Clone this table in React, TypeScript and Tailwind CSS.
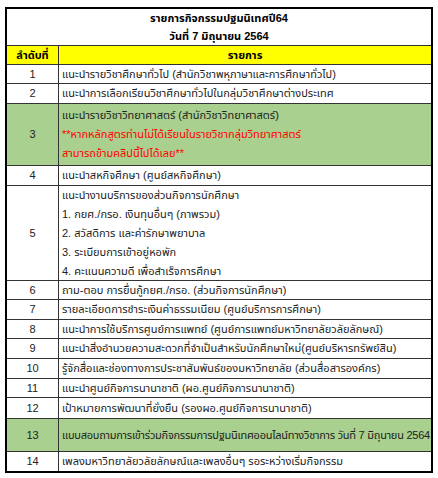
import React from "react";

type Row = { n: string; lines: React.ReactNode[]; h: string; lh?: string; green?: boolean };

const rows: Row[] = [
  { n: "1", lines: ["แนะนำรายวิชาศึกษาทั่วไป (สำนักวิชาพหุภาษาและการศึกษาทั่วไป)"], h: "h-[19px]" },
  { n: "2", lines: ["แนะนำการเลือกเรียนวิชาศึกษาทั่วไปในกลุ่มวิชาศึกษาต่างประเทศ"], h: "h-[20px]" },
  {
    n: "3",
    green: true,
    h: "h-[62px]",
    lines: [
      "แนะนำรายวิชาวิทยาศาสตร์ (สำนักวิชาวิทยาศาสตร์)",
      <span className="text-[#ff0000]">**หากหลักสูตรท่านไม่ได้เรียนในรายวิชากลุ่มวิทยาศาสตร์</span>,
      <span className="text-[#ff0000]">สามารถข้ามคลิปนี้ไปได้เลย**</span>,
    ],
  },
  { n: "4", lines: ["แนะนำสหกิจศึกษา (ศูนย์สหกิจศึกษา)"], h: "h-[20px]" },
  {
    n: "5",
    h: "h-[95px]",
    lines: [
      "แนะนำงานบริการของส่วนกิจการนักศึกษา",
      "1. กยศ./กรอ. เงินทุนอื่นๆ (ภาพรวม)",
      "2. สวัสดิการ และค่ารักษาพยาบาล",
      "3. ระเบียบการเข้าอยู่หอพัก",
      "4. คะแนนความดี เพื่อสำเร็จการศึกษา",
    ],
  },
  { n: "6", lines: ["ถาม-ตอบ การยื่นกู้กยศ./กรอ. (ส่วนกิจการนักศึกษา)"], h: "h-[19px]" },
  { n: "7", lines: ["รายละเอียดการชำระเงินค่าธรรมเนียม (ศูนย์บริการการศึกษา)"], h: "h-[20px]" },
  { n: "8", lines: ["แนะนำการใช้บริการศูนย์การแพทย์ (ศูนย์การแพทย์มหาวิทยาลัยวลัยลักษณ์)"], h: "h-[19px]" },
  { n: "9", lines: ["แนะนำสิ่งอำนวยความสะดวกที่จำเป็นสำหรับนักศึกษาใหม่(ศูนย์บริหารทรัพย์สิน)"], h: "h-[20px]" },
  { n: "10", lines: ["รู้จักสื่อและช่องทางการประชาสัมพันธ์ของมหาวิทยาลัย (ส่วนสื่อสารองค์กร)"], h: "h-[20px]" },
  { n: "11", lines: ["แนะนำศูนย์กิจการนานาชาติ (ผอ.ศูนย์กิจการนานาชาติ)"], h: "h-[19px]" },
  { n: "12", lines: ["เป้าหมายการพัฒนาที่ยั่งยืน (รองผอ.ศูนย์กิจการนานาชาติ)"], h: "h-[21px]" },
  { n: "13", green: true, lines: ["แบบสอบถามการเข้าร่วมกิจกรรมการปฐมนิเทศออนไลน์ทางวิชาการ วันที่ 7 มิถุนายน 2564"], h: "h-[33px]" },
  { n: "14", lines: ["เพลงมหาวิทยาลัยวลัยลักษณ์และเพลงอื่นๆ รอระหว่างเริ่มกิจกรรม"], h: "h-[19px]" },
];

export default function App() {
  return (
    <div
      className="w-[438px] h-[478px] bg-white pt-[7px] pl-[5px]"
      style={{ fontFamily: "Tahoma, 'Liberation Sans', 'Noto Sans Thai', sans-serif" }}
    >
      <div className="w-[428px] border-2 border-black text-[11px] text-[#222]">
        <div className="h-[37px] border-b border-[#333] flex flex-col items-center justify-center font-bold leading-[18px] text-black">
          <div>รายการกิจกรรมปฐมนิเทศปี64</div>
          <div>วันที่ 7 มิถุนายน 2564</div>
        </div>
        <div className="h-[19px] flex bg-[#ffff00] border-b border-[#333] font-bold text-black">
          <div className="w-[52px] shrink-0 border-r border-[#333] flex items-center justify-center">ลำดับที่</div>
          <div className="flex-1 flex items-center justify-center">รายการ</div>
        </div>
        {rows.map((r, idx) => (
          <div
            key={r.n}
            className={`${r.h} flex ${idx < rows.length - 1 ? "border-b border-[#333]" : ""} ${r.green ? "bg-[#a9d08e]" : ""}`}
          >
            <div className="w-[52px] shrink-0 border-r border-[#333] flex items-center justify-center">{r.n}</div>
            <div className="flex-1 min-w-0 pl-[3px] flex flex-col justify-center whitespace-nowrap leading-[19px]">
              {r.lines.map((l, i) => (
                <div key={i} className={r.n === "13" ? "tracking-[-0.25px]" : ""}>{l}</div>
              ))}
            </div>
          </div>
        ))}
      </div>
    </div>
  );
}
